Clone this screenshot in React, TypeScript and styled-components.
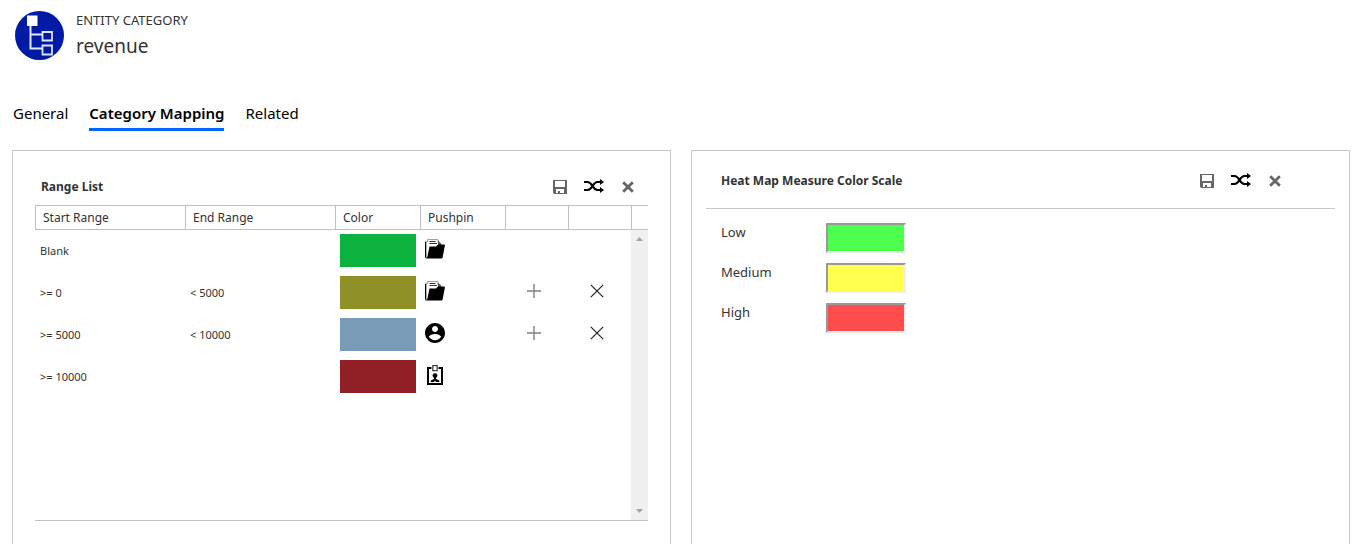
import React from "react";
import styled, { createGlobalStyle } from "styled-components";

const GlobalStyle = createGlobalStyle`
  *, *::before, *::after { box-sizing: border-box; }
  body {
    margin: 0;
    background: #fff;
    color: #333;
    font-family: "Segoe UI", "Noto Sans", "Open Sans", sans-serif;
    font-size: 12px;
  }
`;

const Page = styled.div`
  min-height: 100vh;
  display: flex;
  flex-direction: column;
`;

const Header = styled.header`
  display: flex;
  gap: 12px;
  padding: 11px 15px 0;
`;

const HeaderText = styled.div`
  display: flex;
  flex-direction: column;
`;

const EntityType = styled.span`
  font-size: 13px;
  line-height: 18px;
`;

const EntityName = styled.h1`
  margin: 0;
  font-size: 19px;
  font-weight: 400;
  line-height: 34px;
`;

const TabList = styled.div`
  display: flex;
  gap: 21px;
  padding: 36px 13px 0;
`;

const Tab = styled.button<{ $active?: boolean }>`
  padding: 0 0 1px;
  border: 0;
  border-bottom: 3px solid ${(p) => (p.$active ? "#0066ff" : "transparent")};
  background: none;
  color: #000;
  font: inherit;
  font-size: 15px;
  font-weight: ${(p) => (p.$active ? 600 : 400)};
  line-height: 28px;
`;

const Panels = styled.main`
  flex: 1;
  display: grid;
  grid-template-columns: 1fr 1fr;
  gap: 20px;
  padding: 19px 14px 0 12px;
`;

const Panel = styled.section<{ $inset: number }>`
  padding: 0 ${(p) => p.$inset}px;
  border: 1px solid #c8c8c8;
  border-bottom: 0;
`;

const RangeHeading = styled.div`
  display: flex;
  align-items: center;
  justify-content: space-between;
  padding: 18px 13px 0 6px;
`;

const ScaleHeading = styled(RangeHeading)`
  padding: 12px 53px 9px 15px;
  border-bottom: 1px solid #c8c8c8;
`;

const PanelTitle = styled.h2`
  margin: 0;
  font-size: 12px;
  font-weight: 700;
  line-height: 36px;
`;

const Toolbar = styled.div`
  display: flex;
  align-items: center;
  gap: 17px;
`;

const IconButton = styled.button`
  display: flex;
  padding: 0;
  border: 0;
  background: none;
`;

const RangeTable = styled.table`
  width: 100%;
  table-layout: fixed;
  border-spacing: 0;
  border-bottom: 1px solid #c0c0c0;
`;

const HeadCell = styled.th<{ $width?: number }>`
  width: ${(p) => (p.$width ? `${p.$width}px` : "auto")};
  height: 25px;
  padding: 0 0 0 7px;
  border: 1px solid #c0c0c0;
  border-right: 0;
  font-weight: 400;
  text-align: left;
`;

const Cell = styled.td<{ $pad?: number }>`
  height: 42px;
  padding: 0 0 1px ${(p) => p.$pad ?? 5}px;
  font-size: 11px;
`;

const IconCell = styled(Cell)`
  padding-bottom: 4px;
`;

const FillerCell = styled.td`
  height: 122px;
  padding: 0;
`;

const ScrollCell = styled.td`
  height: 290px;
  padding: 0;
  background: #f0f0f0;
`;

const ScrollTrack = styled.div`
  height: 290px;
  display: flex;
  flex-direction: column;
  align-items: center;
  justify-content: space-between;
  padding: 7px 0;
`;

const RangeSwatch = styled.input<{ $color: string }>`
  display: block;
  width: 76px;
  height: 33px;
  padding: 0;
  border: 0;
  background: ${(p) => p.$color};
`;

const ScaleSwatch = styled.input<{ $color: string }>`
  width: 80px;
  height: 30px;
  padding: 0;
  border: 2px solid;
  border-color: #999 #eee #eee #999;
  background: ${(p) => p.$color};
`;

const ScaleList = styled.div`
  display: flex;
  flex-direction: column;
  gap: 10px;
  padding: 14px 15px;
`;

const ScaleRow = styled.div`
  display: flex;
`;

const ScaleLabel = styled.label`
  width: 105px;
  font-size: 13px;
  line-height: 18px;
`;

const Icon = styled.svg`
  display: block;
`;

const EntityLogo = () => (
  <Icon width="49" height="49" viewBox="0 0 49 49" fill="none" aria-hidden="true">
    <circle cx="24.5" cy="24.5" r="24.5" fill="#001aa5" />
    <rect x="12" y="4.5" width="10.5" height="10.5" fill="#fff" />
    <path d="M15.5 15V37.5H27M15.5 23.5H27" stroke="#e4e8ff" strokeWidth="2" />
    <path d="M27.5 21H37V29.5H27.5ZM27.5 34.5H37V43.5H27.5Z" stroke="#dfe3ff" strokeWidth="1.8" />
  </Icon>
);

const SaveIcon = () => (
  <Icon width="14" height="14" viewBox="0 0 14 14" fill="#666" aria-hidden="true">
    <path
      fillRule="evenodd"
      d="M0 0H14V14H1.2L0 12.8ZM2 1V7H12V1ZM3 9V13H5V11H7V13H11V9Z"
    />
  </Icon>
);

const ShuffleIcon = () => (
  <Icon width="20" height="16" viewBox="0 0 20 16" aria-hidden="true">
    <path
      d="M0 3H3.5C8.5 3 8.5 11 13.5 11H16.5M0 11H3.5C8.5 11 8.5 3 13.5 3H16.5"
      fill="none"
      stroke="#000"
      strokeWidth="2.2"
    />
    <path d="M16 0L20 3L16 6ZM16 8L20 11L16 14Z" />
  </Icon>
);

const CloseIcon = () => (
  <Icon width="14" height="14" viewBox="0 0 14 14" aria-hidden="true">
    <path d="M2.2 2.2L11.8 11.8M11.8 2.2L2.2 11.8" stroke="#666" strokeWidth="2.8" />
  </Icon>
);

const PlusIcon = () => (
  <Icon width="14" height="14" viewBox="0 0 14 14" aria-hidden="true">
    <path d="M0 7H14M7 0V14" stroke="#808080" strokeWidth="1.4" />
  </Icon>
);

const DeleteIcon = () => (
  <Icon width="14" height="14" viewBox="0 0 14 14" aria-hidden="true">
    <path d="M.8 .8L13.2 13.2M13.2 .8L.8 13.2" stroke="#222" strokeWidth="1.2" />
  </Icon>
);

const FolderIcon = () => (
  <Icon width="20" height="20" viewBox="0 0 20 20" aria-hidden="true">
    <path d="M.7 18.5V2.5H2.5V.6H13V4" fill="#fff" stroke="#999" strokeWidth="1" />
    <path d="M.6 3V18.5" stroke="#000" strokeWidth="1.3" />
    <path d="M4.5 2.5H10.5M4.5 4.5H12" stroke="#333" strokeWidth="1" />
    <path d="M13 1.4L16.2 4.6V7H13Z" fill="#555" />
    <path d="M4.5 7.4H11L13 5.6H19.2Q20 5.6 19.9 6.5L17.6 18.4Q17.4 19.4 16.4 19.4H1.2Q.3 19.4 .5 18.5H2.2Z" />
  </Icon>
);

const PersonIcon = () => (
  <Icon width="20" height="20" viewBox="2 2 20 20" aria-hidden="true">
    <path d="M12 2C6.48 2 2 6.48 2 12s4.48 10 10 10 10-4.48 10-10S17.52 2 12 2zm0 3c1.66 0 3 1.34 3 3s-1.34 3-3 3-3-1.34-3-3 1.34-3 3-3zm0 14.2c-2.5 0-4.71-1.28-6-3.22.03-1.99 4-3.08 6-3.08 1.99 0 5.97 1.09 6 3.08-1.29 1.94-3.5 3.22-6 3.22z" />
  </Icon>
);

const BadgeIcon = () => (
  <Icon width="20" height="20" viewBox="0 0 20 20" aria-hidden="true">
    <path d="M6.5 3H3V19H17V3H13.5" fill="none" stroke="#000" strokeWidth="2" />
    <path d="M7.8 .7H12.2V5.6H7.8Z" fill="#fff" stroke="#444" strokeWidth="1.3" />
    <circle cx="10" cy="10.6" r="2.4" />
    <path d="M9 12H11V14L14.3 15.4V17H11L10 15.4L9 17H5.7V15.4L9 14Z" />
  </Icon>
);

const pins = { folder: FolderIcon, person: PersonIcon, badge: BadgeIcon };

const ranges: { start: string; end: string; color: string; pin: keyof typeof pins; editable: boolean }[] = [
  { start: "Blank", end: "", color: "#0bb23e", pin: "folder", editable: false },
  { start: ">= 0", end: "< 5000", color: "#8f9126", pin: "folder", editable: true },
  { start: ">= 5000", end: "< 10000", color: "#789bb7", pin: "person", editable: true },
  { start: ">= 10000", end: "", color: "#901f26", pin: "badge", editable: false },
];

const scale = [
  { name: "Low", color: "#4dff4d" },
  { name: "Medium", color: "#ffff4d" },
  { name: "High", color: "#ff4d4d" },
];

const PanelActions = () => (
  <Toolbar>
    <IconButton aria-label="Save"><SaveIcon /></IconButton>
    <IconButton aria-label="Shuffle colors"><ShuffleIcon /></IconButton>
    <IconButton aria-label="Clear"><CloseIcon /></IconButton>
  </Toolbar>
);

export default function App() {
  return (
    <Page>
      <GlobalStyle />
      <Header>
        <EntityLogo />
        <HeaderText>
          <EntityType>ENTITY CATEGORY</EntityType>
          <EntityName>revenue</EntityName>
        </HeaderText>
      </Header>
      <TabList role="tablist">
        <Tab role="tab" aria-selected={false}>General</Tab>
        <Tab role="tab" aria-selected $active>Category Mapping</Tab>
        <Tab role="tab" aria-selected={false}>Related</Tab>
      </TabList>
      <Panels>
        <Panel $inset={22}>
          <RangeHeading>
            <PanelTitle>Range List</PanelTitle>
            <PanelActions />
          </RangeHeading>
          <RangeTable>
            <thead>
              <tr>
                <HeadCell>Start Range</HeadCell>
                <HeadCell>End Range</HeadCell>
                <HeadCell $width={85}>Color</HeadCell>
                <HeadCell $width={85}>Pushpin</HeadCell>
                <HeadCell $width={63} aria-label="Add" />
                <HeadCell $width={63} aria-label="Delete" />
                <HeadCell $width={17} aria-label="Scroll" />
              </tr>
            </thead>
            <tbody>
              {ranges.map((range, index) => {
                const Pin = pins[range.pin];
                return (
                  <tr key={range.start}>
                    <Cell>{range.start}</Cell>
                    <Cell>{range.end}</Cell>
                    <Cell>
                      <RangeSwatch $color={range.color} readOnly aria-label={`Color of ${range.start}`} />
                    </Cell>
                    <IconCell>
                      <IconButton aria-label={`Pushpin of ${range.start}`}><Pin /></IconButton>
                    </IconCell>
                    <IconCell $pad={22}>
                      {range.editable && <IconButton aria-label="Add range"><PlusIcon /></IconButton>}
                    </IconCell>
                    <IconCell $pad={22}>
                      {range.editable && <IconButton aria-label="Delete range"><DeleteIcon /></IconButton>}
                    </IconCell>
                    {index === 0 && (
                      <ScrollCell rowSpan={ranges.length + 1}>
                        <ScrollTrack>
                          <Icon width="7" height="4" viewBox="0 0 7 4" fill="#a3a3a3"><path d="M0 4L3.5 0L7 4Z" /></Icon>
                          <Icon width="7" height="4" viewBox="0 0 7 4" fill="#a3a3a3"><path d="M0 0H7L3.5 4Z" /></Icon>
                        </ScrollTrack>
                      </ScrollCell>
                    )}
                  </tr>
                );
              })}
              <tr><FillerCell colSpan={6} /></tr>
            </tbody>
          </RangeTable>
        </Panel>
        <Panel $inset={14}>
          <ScaleHeading>
            <PanelTitle>Heat Map Measure Color Scale</PanelTitle>
            <PanelActions />
          </ScaleHeading>
          <ScaleList>
            {scale.map((level) => (
              <ScaleRow key={level.name}>
                <ScaleLabel htmlFor={`scale-${level.name}`}>{level.name}</ScaleLabel>
                <ScaleSwatch id={`scale-${level.name}`} $color={level.color} readOnly />
              </ScaleRow>
            ))}
          </ScaleList>
        </Panel>
      </Panels>
    </Page>
  );
}
